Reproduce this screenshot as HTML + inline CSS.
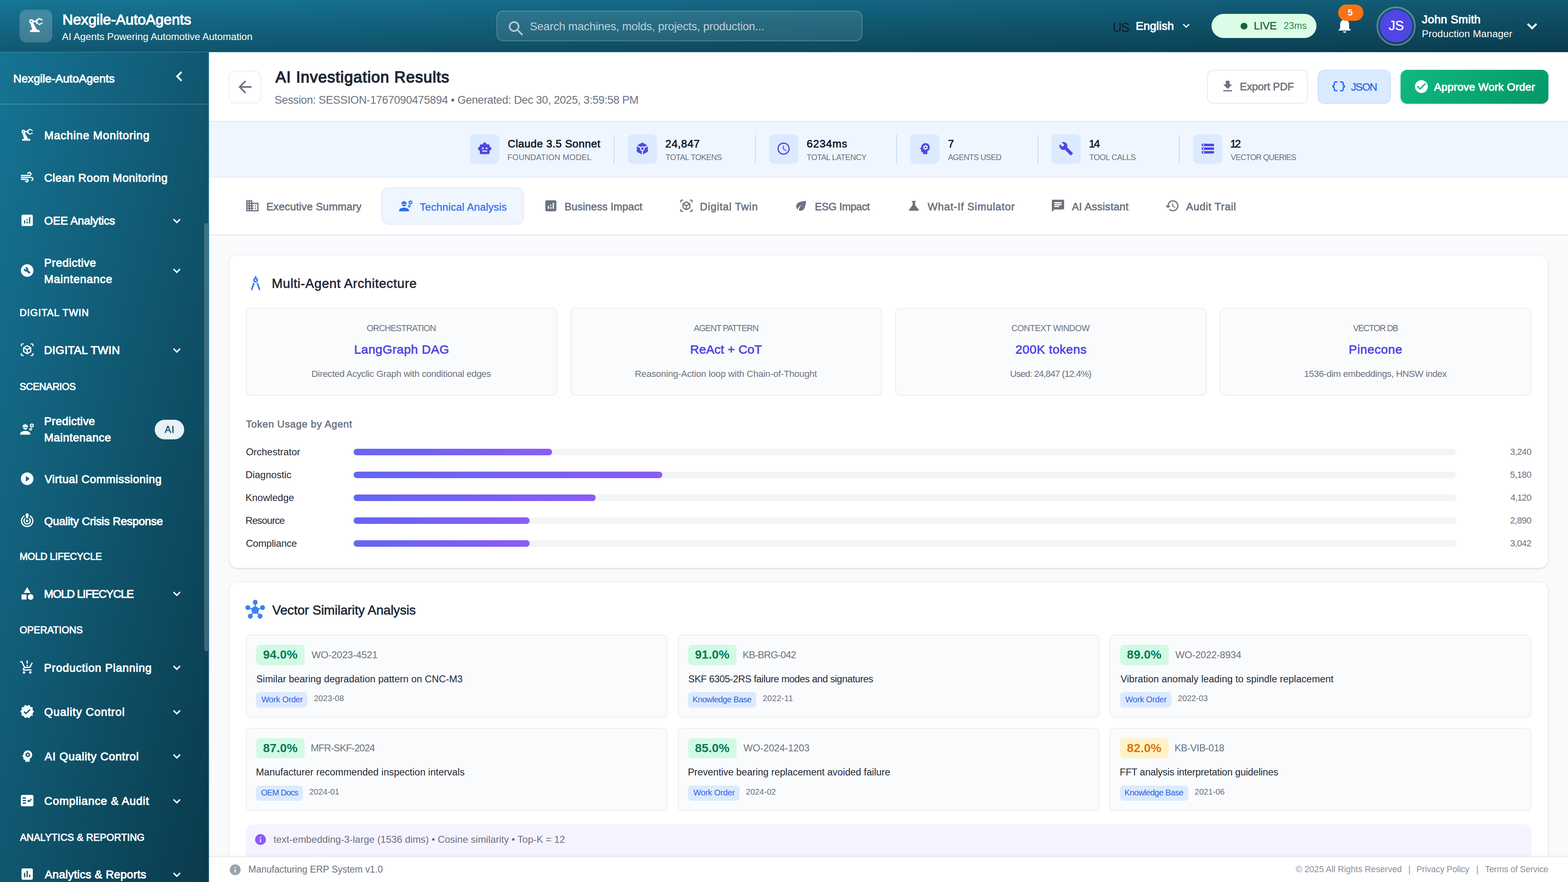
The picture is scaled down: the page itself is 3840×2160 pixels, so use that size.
<!DOCTYPE html>
<html lang="en">
<head>
<meta charset="utf-8">
<title>Nexgile-AutoAgents – AI Investigation Results</title>
<meta name="viewport" content="width=3840, initial-scale=1">
<style>
*{margin:0;padding:0}
html,body{width:3840px;height:2160px;overflow:hidden;background:#f9fafb}
body{font-family:"Liberation Sans",sans-serif;-webkit-font-smoothing:antialiased}
#app{position:absolute;left:0;top:0;width:3840px;height:2160px;overflow:hidden}
.a,.t,.i{position:absolute;display:block}
.t{line-height:1;white-space:pre;font-weight:400;font-style:normal}
#topbar{position:absolute;left:0;top:0;width:3840px;height:127.5px;box-sizing:border-box;
 background:linear-gradient(to bottom right,#177696,#0a3a4c);border-bottom:1px solid rgba(255,255,255,.2)}
#sidebar{position:absolute;left:0;top:127.5px;width:512px;height:2032.5px;box-sizing:border-box;overflow:hidden;
 background:linear-gradient(to bottom right,#167494,#0a3a4c);border-right:2px solid rgba(255,255,255,.09)}
#sidebar>*{margin-top:-127.5px}
#main{position:absolute;left:0;top:0;width:3840px;height:2160px;overflow:hidden}
.pagehead{left:512px;top:127.5px;width:3328px;height:170px;box-sizing:border-box;background:#fff;border-bottom:2px solid #e5e7eb}
.statsbar{left:512px;top:297.5px;width:3328px;height:137.5px;box-sizing:border-box;background:#eff6ff;border-bottom:2px solid #e3edfc}
.tabsbar{left:512px;top:435px;width:3328px;height:141px;box-sizing:border-box;background:#fff;border-bottom:2px solid #e5e7eb}

</style>
</head>
<body>
<div id="app">
<main id="main">
<div class="a pagehead"></div>
<div class="a statsbar"></div>
<div class="a tabsbar"></div>

<div class="a" style="left:560px;top:173px;width:80px;height:80px;box-sizing:border-box;border:2px solid #eceef1;border-radius:16px;background:#fff;"></div>
<svg class="i" viewBox="0 0 24 24" width="48" height="48" style="left:576.2px;top:189px;"><path d="M20 11H7.83l5.59-5.59L12 4l-8 8 8 8 1.41-1.41L7.83 13H20v-2z" fill="#6b7280"/></svg>
<h1 class="t" style="left:674.8px;top:170px;font-size:38.2px;-webkit-text-stroke:1.68px;letter-spacing:1.13px;color:#1f2937;">AI Investigation Results</h1>
<p class="t" style="left:672.6px;top:232px;font-size:27px;letter-spacing:-0.37px;color:#6b7280;">Session: SESSION-1767090475894 • Generated: Dec 30, 2025, 3:59:58 PM</p>
<div class="a" style="left:2955.6px;top:171.3px;width:247.4px;height:83px;box-sizing:border-box;border:2px solid #e8eaed;border-radius:16px;background:#fff;"></div>
<svg class="i" viewBox="0 0 24 24" width="37" height="37" style="left:2987.5px;top:192.5px;"><path d="M19 9h-4V3H9v6H5l7 7 7-7zM5 18v2h14v-2H5z" fill="#6b7280"/></svg>
<span class="t" style="left:3036.3px;top:199px;font-size:26px;-webkit-text-stroke:0.81px;letter-spacing:-0.2px;color:#6b7280;">Export PDF</span>
<div class="a" style="left:3227px;top:171.3px;width:179px;height:83px;box-sizing:border-box;border:2px solid #c9defc;border-radius:16px;background:#dbeafe;"></div>
<svg class="i" viewBox="0 0 24 24" width="37" height="37" style="left:3260px;top:192.5px;"><path d="M4 7v2c0 .55-.45 1-1 1H2v4h1c.55 0 1 .45 1 1v2c0 1.65 1.35 3 3 3h3v-2H7c-.55 0-1-.45-1-1v-2c0-1.3-.84-2.42-2-2.83v-.34C5.16 11.42 6 10.3 6 9V7c0-.55.45-1 1-1h3V4H7C5.35 4 4 5.35 4 7z M21 10c-.55 0-1-.45-1-1V7c0-1.65-1.35-3-3-3h-3v2h3c.55 0 1 .45 1 1v2c0 1.3.84 2.42 2 2.83v.34c-1.16.41-2 1.52-2 2.83v2c0 .55-.45 1-1 1h-3v2h3c1.65 0 3-1.35 3-3v-2c0-.55.45-1 1-1h1v-4h-1z" fill="#2563eb"/></svg>
<span class="t" style="left:3308.4px;top:200px;font-size:26px;-webkit-text-stroke:0.42px;letter-spacing:-1.53px;color:#2563eb;">JSON</span>
<div class="a" style="left:3430px;top:171px;width:362px;height:83px;border-radius:16px;background:linear-gradient(135deg,#10b981,#059669);box-shadow:0 2px 4px rgba(5,150,105,.18);"></div>
<svg class="i" viewBox="0 0 24 24" width="38" height="38" style="left:3462.4px;top:192.5px;"><path d="M12 2C6.48 2 2 6.48 2 12s4.48 10 10 10 10-4.48 10-10S17.52 2 12 2zm-2 15l-5-5 1.41-1.41L10 14.17l7.59-7.59L19 8l-9 9z" fill="#fff"/></svg>
<span class="t" style="left:3512px;top:200px;font-size:26.5px;-webkit-text-stroke:1.17px;letter-spacing:0.29px;color:#fff;">Approve Work Order</span>
<div class="a" style="left:1151.3px;top:329.3px;width:71.4px;height:72px;border-radius:12px;background:#dbeafe;"></div>
<svg class="i" viewBox="0 0 24 24" width="36" height="36" style="left:1168.8px;top:346.2px;"><path d="M20 9V7c0-1.1-.9-2-2-2h-3c0-1.66-1.34-3-3-3S9 3.34 9 5H6c-1.1 0-2 .9-2 2v2c-1.66 0-3 1.34-3 3s1.34 3 3 3v4c0 1.1.9 2 2 2h12c1.1 0 2-.9 2-2v-4c1.66 0 3-1.34 3-3s-1.34-3-3-3zM7.5 11.5c0-.83.67-1.5 1.5-1.5s1.5.67 1.5 1.5S9.83 13 9 13s-1.5-.67-1.5-1.5zM16 17H8v-2h8v2zm-1-4c-.83 0-1.5-.67-1.5-1.5S14.17 10 15 10s1.5.67 1.5 1.5S15.83 13 15 13z" fill="#4f46e5"/></svg>
<span class="t" style="left:1243.2px;top:339px;font-size:26.6px;-webkit-text-stroke:0.82px;letter-spacing:0.41px;color:#111827;">Claude 3.5 Sonnet</span>
<span class="t" style="left:1242.6px;top:376px;font-size:19.5px;letter-spacing:0.23px;color:#6b7280;">FOUNDATION MODEL</span>
<div class="a" style="left:1502.9px;top:329.6px;width:2.2px;height:71.5px;background:#c3dafc;"></div>
<div class="a" style="left:1537.7px;top:329.3px;width:71.4px;height:72px;border-radius:12px;background:#dbeafe;"></div>
<svg class="i" viewBox="0 0 24 24" width="36" height="36" style="left:1555.2px;top:346.2px;"><defs><mask id="tokm"><path d="M12 2l9 5v10l-9 5-9-5V7z" fill="#fff"/><path d="M12 12L3 7M12 12l9-5M12 12v10" stroke="#000" stroke-width="2" fill="none"/><circle cx="12" cy="12" r="3.9" fill="#000"/><circle cx="12" cy="12" r="2.05" fill="#fff"/></mask></defs><rect width="24" height="24" fill="#4f46e5" mask="url(#tokm)"/></svg>
<span class="t" style="left:1629.3px;top:339px;font-size:26.6px;-webkit-text-stroke:0.82px;letter-spacing:0.6px;color:#111827;">24,847</span>
<span class="t" style="left:1629.8px;top:376px;font-size:19.5px;letter-spacing:-0.62px;color:#6b7280;">TOTAL TOKENS</span>
<div class="a" style="left:1848.9px;top:329.6px;width:2.2px;height:71.5px;background:#c3dafc;"></div>
<div class="a" style="left:1883.5px;top:329.3px;width:71.4px;height:72px;border-radius:12px;background:#dbeafe;"></div>
<svg class="i" viewBox="0 0 24 24" width="36" height="36" style="left:1901px;top:346.2px;"><path d="M11.99 2C6.47 2 2 6.48 2 12s4.47 10 9.99 10C17.52 22 22 17.52 22 12S17.52 2 11.99 2zM12 20c-4.42 0-8-3.58-8-8s3.58-8 8-8 8 3.58 8 8-3.58 8-8 8zm.5-13H11v6l5.25 3.15.75-1.23-4.5-2.67z" fill="#4f46e5"/></svg>
<span class="t" style="left:1975.6px;top:339px;font-size:26.6px;-webkit-text-stroke:0.82px;letter-spacing:0.92px;color:#111827;">6234ms</span>
<span class="t" style="left:1975.6px;top:376px;font-size:19.5px;letter-spacing:-0.62px;color:#6b7280;">TOTAL LATENCY</span>
<div class="a" style="left:2194.7px;top:329.6px;width:2.2px;height:71.5px;background:#c3dafc;"></div>
<div class="a" style="left:2229.3px;top:329.3px;width:71.4px;height:72px;border-radius:12px;background:#dbeafe;"></div>
<svg class="i" viewBox="0 0 24 24" width="36" height="36" style="left:2246.8px;top:346.2px;"><path d="M13 8.57c-.79 0-1.43.64-1.43 1.43s.64 1.43 1.43 1.43 1.43-.64 1.43-1.43-.64-1.43-1.43-1.43z M13 3C9.25 3 6.2 5.94 6.02 9.64L4.1 12.2c-.25.33-.01.8.4.8H6v3c0 1.1.9 2 2 2h1v3h7v-4.68c2.36-1.12 4-3.53 4-6.32 0-3.87-3.13-7-7-7zm3 7c0 .13-.01.26-.02.39l.83.66c.08.06.1.16.05.25l-.8 1.39c-.05.09-.16.12-.24.09l-.99-.4c-.21.16-.43.29-.67.39L14 13.83c-.01.1-.1.17-.2.17h-1.6c-.1 0-.18-.07-.2-.17l-.15-1.06c-.25-.1-.47-.23-.68-.39l-.99.4c-.09.03-.2 0-.25-.09l-.8-1.39c-.05-.08-.03-.19.05-.25l.84-.66c-.01-.13-.02-.26-.02-.39s.02-.27.04-.39l-.85-.66c-.08-.06-.1-.16-.05-.26l.8-1.38c.05-.09.15-.12.24-.09l1 .4c.2-.15.43-.29.67-.39l.15-1.06c.02-.1.1-.17.2-.17h1.6c.1 0 .18.07.2.17l.15 1.06c.24.1.46.23.67.39l1-.4c.09-.03.2 0 .24.09l.8 1.38c.05.09.03.2-.05.26l-.85.66c.03.12.04.25.04.39z" fill="#4f46e5"/></svg>
<span class="t" style="left:2321.5px;top:339px;font-size:26.6px;-webkit-text-stroke:0.82px;color:#111827;">7</span>
<span class="t" style="left:2321.4px;top:376px;font-size:19.5px;letter-spacing:-0.84px;color:#6b7280;">AGENTS USED</span>
<div class="a" style="left:2540.5px;top:329.6px;width:2.2px;height:71.5px;background:#c3dafc;"></div>
<div class="a" style="left:2575.3px;top:329.3px;width:71.4px;height:72px;border-radius:12px;background:#dbeafe;"></div>
<svg class="i" viewBox="0 0 24 24" width="36" height="36" style="left:2592.8px;top:346.2px;"><path d="M22.7 19l-9.1-9.1c.9-2.3.4-5-1.5-6.9-2-2-5-2.4-7.4-1.3L9 6 6 9 1.6 4.7C.4 7.1.9 10.1 2.9 12.1c1.9 1.9 4.6 2.4 6.9 1.5l9.1 9.1c.4.4 1 .4 1.4 0l2.3-2.3c.5-.4.5-1.1.1-1.4z" fill="#4f46e5"/></svg>
<span class="t" style="left:2666.8px;top:339px;font-size:26.6px;-webkit-text-stroke:0.82px;letter-spacing:-2.6px;color:#111827;">14</span>
<span class="t" style="left:2667.4px;top:376px;font-size:19.5px;letter-spacing:-0.53px;color:#6b7280;">TOOL CALLS</span>
<div class="a" style="left:2886.9px;top:329.6px;width:2.2px;height:71.5px;background:#c3dafc;"></div>
<div class="a" style="left:2922px;top:329.3px;width:71.4px;height:72px;border-radius:12px;background:#dbeafe;"></div>
<svg class="i" viewBox="0 0 24 24" width="36" height="36" style="left:2939.5px;top:346.2px;"><path d="M2 20h20v-4H2v4zm2-3h2v2H4v-2zM2 4v4h20V4H2zm4 3H4V5h2v2zm-4 7h20v-4H2v4zm2-3h2v2H4v-2z" fill="#4f46e5"/></svg>
<span class="t" style="left:3012.7px;top:339px;font-size:26.6px;-webkit-text-stroke:0.82px;letter-spacing:-3.2px;color:#111827;">12</span>
<span class="t" style="left:3014.1px;top:376px;font-size:19.5px;letter-spacing:-1.03px;color:#6b7280;">VECTOR QUERIES</span>
<div class="a" style="left:934.2px;top:459.2px;width:349.3px;height:90.8px;box-sizing:border-box;border:2px solid #dfeafc;border-radius:18px;background:#eff6ff;"></div>
<svg class="i" viewBox="0 0 24 24" width="36" height="36" style="left:600px;top:485.9px;"><path d="M12 7V3H2v18h20V7H12zM6 19H4v-2h2v2zm0-4H4v-2h2v2zm0-4H4V9h2v2zm0-4H4V5h2v2zm4 12H8v-2h2v2zm0-4H8v-2h2v2zm0-4H8V9h2v2zm0-4H8V5h2v2zm10 12h-8v-2h2v-2h-2v-2h2v-2h-2V9h8v10zm-2-8h-2v2h2v-2zm0 4h-2v2h2v-2z" fill="#6b7280"/></svg>
<span class="t" style="left:652.2px;top:494px;font-size:25.8px;-webkit-text-stroke:0.8px;letter-spacing:0.22px;color:#6b7280;">Executive Summary</span>
<svg class="i" viewBox="0 0 24 24" width="36" height="36" style="left:975.7px;top:485.9px;"><path d="M9 15c-2.67 0-8 1.34-8 4v2h16v-2c0-2.66-5.33-4-8-4z M22.1 6.84c.01-.11.02-.22.02-.34 0-.12-.01-.23-.03-.34l.74-.58c.07-.05.08-.15.04-.22l-.7-1.21c-.04-.08-.14-.1-.21-.08l-.86.35c-.18-.14-.38-.25-.59-.34l-.13-.93c-.02-.09-.09-.15-.18-.15h-1.4c-.09 0-.16.06-.17.15l-.13.93c-.21.09-.41.21-.59.34l-.87-.35c-.08-.03-.17 0-.21.08l-.7 1.21c-.04.08-.03.17.04.22l.74.58c-.02.11-.03.23-.03.34 0 .11.01.23.03.34l-.74.58c-.07.05-.08.15-.04.22l.7 1.21c.04.08.14.1.21.08l.87-.35c.18.14.38.25.59.34l.13.93c.01.09.08.15.17.15h1.4c.09 0 .16-.06.17-.15l.13-.93c.21-.09.41-.21.59-.34l.87.35c.08.03.17 0 .21-.08l.7-1.21c.04-.08.03-.17-.04-.22l-.73-.58zm-2.6.91c-.69 0-1.25-.56-1.25-1.25s.56-1.25 1.25-1.25 1.25.56 1.25 1.25-.56 1.25-1.25 1.25z M19.92 11.68l-.5-.87c-.03-.06-.1-.08-.15-.06l-.62.25c-.13-.1-.27-.18-.42-.24l-.09-.66c-.02-.06-.08-.1-.14-.1h-1c-.06 0-.11.04-.12.11l-.09.66c-.15.06-.29.15-.42.24l-.62-.25c-.06-.02-.12 0-.15.06l-.5.87c-.03.06-.02.12.03.16l.53.41c-.01.08-.02.16-.02.24 0 .08.01.17.02.24l-.53.41c-.05.04-.06.11-.03.16l.5.87c.03.06.1.08.15.06l.62-.25c.13.1.27.18.42.24l.09.66c.01.07.06.11.12.11h1c.06 0 .12-.04.12-.11l.09-.66c.15-.06.29-.15.42-.24l.62.25c.06.02.12 0 .15-.06l.5-.87c.03-.06.02-.12-.03-.16l-.52-.41c.01-.08.02-.16.02-.24 0-.08-.01-.17-.02-.24l.53-.41c.05-.04.06-.11.04-.17zm-2.42 1.65c-.46 0-.83-.38-.83-.83 0-.46.38-.83.83-.83s.83.38.83.83c0 .46-.37.83-.83.83z M4.74 9h8.53c.27 0 .49-.22.49-.49v-.02c0-.27-.22-.49-.49-.49H13c0-1.48-.81-2.75-2-3.45v.95c0 .28-.22.5-.5.5s-.5-.22-.5-.5V4.14C9.68 4.06 9.35 4 9 4s-.68.06-1 .14V5.5c0 .28-.22.5-.5.5S7 5.78 7 5.5v-.95C5.81 5.25 5 6.52 5 8h-.26c-.27 0-.49.22-.49.49v.03c0 .26.22.48.49.48z M9 13c1.86 0 3.41-1.28 3.86-3H5.14c.45 1.72 2 3 3.86 3z" fill="#2e6fe8"/></svg>
<span class="t" style="left:1028px;top:495px;font-size:25.8px;-webkit-text-stroke:0.41px;letter-spacing:0.22px;color:#2e6fe8;">Technical Analysis</span>
<svg class="i" viewBox="0 0 24 24" width="36" height="36" style="left:1330.6px;top:485.9px;"><path d="M19 3H5c-1.1 0-2 .9-2 2v14c0 1.1.9 2 2 2h14c1.1 0 2-.9 2-2V5c0-1.1-.9-2-2-2zM9 17H7v-5h2v5zm4 0h-2v-3h2v3zm0-5h-2v-2h2v2zm4 5h-2V7h2v10z" fill="#6b7280"/></svg>
<span class="t" style="left:1382.4px;top:494px;font-size:25.8px;-webkit-text-stroke:0.8px;letter-spacing:0.11px;color:#6b7280;">Business Impact</span>
<svg class="i" viewBox="0 0 24 24" width="36" height="36" style="left:1662.7px;top:485.9px;"><path d="M3 4c0-.55.45-1 1-1h2V1H4C2.34 1 1 2.34 1 4v2h2V4z M3 20v-2H1v2c0 1.66 1.34 3 3 3h2v-2H4c-.55 0-1-.45-1-1z M20 1h-2v2h2c.55 0 1 .45 1 1v2h2V4c0-1.66-1.34-3-3-3z M21 20c0 .55-.45 1-1 1h-2v2h2c1.66 0 3-1.34 3-3v-2h-2v2z M19 14.87V9.13c0-.72-.38-1.38-1-1.73l-5-2.88c-.31-.18-.65-.27-1-.27s-.69.09-1 .27L6 7.39c-.62.36-1 1.02-1 1.74v5.74c0 .72.38 1.38 1 1.73l5 2.88c.31.18.65.27 1 .27s.69-.09 1-.27l5-2.88c.62-.35 1-1.01 1-1.73zm-8 2.3l-4-2.3v-4.63l4 2.33v4.6zm1-6.33L8.04 8.53 12 6.25l3.96 2.28L12 10.84zm5 4.03l-4 2.3v-4.6l4-2.33v4.63z" fill="#6b7280" transform="translate(12 12) scale(.93) translate(-12 -12)"/></svg>
<span class="t" style="left:1714px;top:494px;font-size:25.8px;-webkit-text-stroke:0.8px;letter-spacing:0.93px;color:#6b7280;">Digital Twin</span>
<svg class="i" viewBox="0 0 24 24" width="36" height="36" style="left:1944px;top:485.9px;"><path d="M6.05 8.05c-2.73 2.73-2.73 7.15-.02 9.88 1.47-3.4 4.09-6.24 7.36-7.93-2.77 2.34-4.71 5.61-5.39 9.32 2.6 1.23 5.8.78 7.95-1.37C19.43 14.47 20 4 20 4S9.53 4.57 6.05 8.05z" fill="#6b7280"/></svg>
<span class="t" style="left:1995.5px;top:494px;font-size:25.8px;-webkit-text-stroke:0.8px;letter-spacing:-0.48px;color:#6b7280;">ESG Impact</span>
<svg class="i" viewBox="0 0 24 24" width="36" height="36" style="left:2219.5px;top:485.9px;"><path d="M19.8 18.4L14 10.67V6.5l1.35-1.69c.26-.33.03-.81-.39-.81H9.04c-.42 0-.65.48-.39.81L10 6.5v4.17L4.2 18.4c-.49.66-.02 1.6.8 1.6h14c.82 0 1.29-.94.8-1.6z" fill="#6b7280"/></svg>
<span class="t" style="left:2271.8px;top:494px;font-size:25.8px;-webkit-text-stroke:0.8px;letter-spacing:0.86px;color:#6b7280;">What-If Simulator</span>
<svg class="i" viewBox="0 0 24 24" width="36" height="36" style="left:2573px;top:485.9px;"><path d="M20 2H4c-1.1 0-1.99.9-1.99 2L2 22l4-4h14c1.1 0 2-.9 2-2V4c0-1.1-.9-2-2-2zM6 9h12v2H6V9zm8 5H6v-2h8v2zm4-6H6V6h12v2z" fill="#6b7280"/></svg>
<span class="t" style="left:2625px;top:494px;font-size:25.8px;-webkit-text-stroke:0.8px;letter-spacing:0.36px;color:#6b7280;">AI Assistant</span>
<svg class="i" viewBox="0 0 24 24" width="36" height="36" style="left:2853.3px;top:485.9px;"><path d="M13 3c-4.97 0-9 4.03-9 9H1l3.89 3.89.07.14L9 12H6c0-3.87 3.13-7 7-7s7 3.13 7 7-3.13 7-7 7c-1.93 0-3.68-.79-4.94-2.06l-1.42 1.42C8.27 19.99 10.51 21 13 21c4.97 0 9-4.03 9-9s-4.03-9-9-9zm-1 5v5l4.28 2.54.72-1.21-3.5-2.08V8H12z" fill="#6b7280"/></svg>
<span class="t" style="left:2904.8px;top:494px;font-size:25.8px;-webkit-text-stroke:0.8px;letter-spacing:0.72px;color:#6b7280;">Audit Trail</span>
<section class="a" style="left:559.6px;top:623.4px;width:3232.4px;height:768.6px;box-sizing:border-box;border:2px solid #eef0f3;border-radius:22px;background:#fff;box-shadow:0 2px 3px rgba(0,0,0,.09),0 1px 2px rgba(0,0,0,.05);"></section>
<svg class="i" viewBox="0 0 24 24" width="48" height="48" style="left:601.7px;top:669.6px;"><path d="M6.36 18.78L6.61 21l1.62-1.54 2.77-7.6c-.68-.17-1.28-.51-1.77-.98l-2.87 7.9zM14.77 10.88c-.49.47-1.1.81-1.77.98l2.77 7.6L17.39 21l.26-2.22-2.88-7.9zM15 8c0-1.3-.84-2.4-2-2.82V3h-2v2.18C9.84 5.6 9 6.7 9 8c0 1.66 1.34 3 3 3s3-1.34 3-3zm-3 1c-.55 0-1-.45-1-1s.45-1 1-1 1 .45 1 1-.45 1-1 1z" fill="#3b82f6"/></svg>
<h2 class="t" style="left:665.5px;top:678px;font-size:32px;-webkit-text-stroke:0.77px;letter-spacing:0.66px;color:#1f2937;">Multi-Agent Architecture</h2>
<div class="a" style="left:601.5px;top:754px;width:763px;height:215px;box-sizing:border-box;border:2px solid #eceef1;border-radius:12px;background:#fafbfc;"></div>
<span class="t" style="left:898.1px;top:794px;font-size:21.3px;letter-spacing:-1.08px;color:#6b7280;">ORCHESTRATION</span>
<span class="t" style="left:867.3px;top:841px;font-size:30.3px;-webkit-text-stroke:0.94px;letter-spacing:0.57px;color:#4f46e5;">LangGraph DAG</span>
<span class="t" style="left:762.7px;top:905px;font-size:22.5px;letter-spacing:-0.35px;color:#6b7280;">Directed Acyclic Graph with conditional edges</span>
<div class="a" style="left:1396.7px;top:754px;width:763px;height:215px;box-sizing:border-box;border:2px solid #eceef1;border-radius:12px;background:#fafbfc;"></div>
<span class="t" style="left:1699.1px;top:794px;font-size:21.3px;letter-spacing:-1.33px;color:#6b7280;">AGENT PATTERN</span>
<span class="t" style="left:1690.1px;top:841px;font-size:30.3px;-webkit-text-stroke:0.94px;letter-spacing:0.17px;color:#4f46e5;">ReAct + CoT</span>
<span class="t" style="left:1554.8px;top:905px;font-size:22.5px;letter-spacing:-0.19px;color:#6b7280;">Reasoning-Action loop with Chain-of-Thought</span>
<div class="a" style="left:2191.9px;top:754px;width:763px;height:215px;box-sizing:border-box;border:2px solid #eceef1;border-radius:12px;background:#fafbfc;"></div>
<span class="t" style="left:2476.7px;top:794px;font-size:21.3px;letter-spacing:-0.66px;color:#6b7280;">CONTEXT WINDOW</span>
<span class="t" style="left:2486.7px;top:841px;font-size:30.3px;-webkit-text-stroke:0.94px;letter-spacing:0.57px;color:#4f46e5;">200K tokens</span>
<span class="t" style="left:2473.5px;top:905px;font-size:22.5px;letter-spacing:-1.01px;color:#6b7280;">Used: 24,847 (12.4%)</span>
<div class="a" style="left:2987.1px;top:754px;width:763px;height:215px;box-sizing:border-box;border:2px solid #eceef1;border-radius:12px;background:#fafbfc;"></div>
<span class="t" style="left:3313.5px;top:794px;font-size:21.3px;letter-spacing:-1.57px;color:#6b7280;">VECTOR DB</span>
<span class="t" style="left:3303.1px;top:841px;font-size:30.3px;-webkit-text-stroke:0.94px;letter-spacing:0.63px;color:#4f46e5;">Pinecone</span>
<span class="t" style="left:3193.5px;top:905px;font-size:22.5px;letter-spacing:-0.47px;color:#6b7280;">1536-dim embeddings, HNSW index</span>
<h3 class="t" style="left:602.3px;top:1027px;font-size:24.6px;-webkit-text-stroke:0.76px;letter-spacing:0.72px;color:#6b7280;">Token Usage by Agent</h3>
<span class="t" style="left:602.2px;top:1095px;font-size:24.1px;letter-spacing:-0.07px;color:#1f2937;">Orchestrator</span>
<div class="a" style="left:865.6px;top:1099px;width:2700.6px;height:16px;border-radius:8px;background:#f3f4f6;"></div>
<div class="a" style="left:865.6px;top:1099px;width:486px;height:16px;border-radius:8px;background:linear-gradient(90deg,#6366f1,#8b5cf6);"></div>
<span class="t" style="left:3698.2px;top:1096px;font-size:22px;letter-spacing:-0.65px;color:#6b7280;">3,240</span>
<span class="t" style="left:601.2px;top:1151px;font-size:24.1px;letter-spacing:-0.02px;color:#1f2937;">Diagnostic</span>
<div class="a" style="left:865.6px;top:1154.8px;width:2700.6px;height:16px;border-radius:8px;background:#f3f4f6;"></div>
<div class="a" style="left:865.6px;top:1154.8px;width:756.3px;height:16px;border-radius:8px;background:linear-gradient(90deg,#6366f1,#8b5cf6);"></div>
<span class="t" style="left:3698.2px;top:1152px;font-size:22px;letter-spacing:-0.65px;color:#6b7280;">5,180</span>
<span class="t" style="left:601.2px;top:1207px;font-size:24.1px;letter-spacing:-0.03px;color:#1f2937;">Knowledge</span>
<div class="a" style="left:865.6px;top:1210.9px;width:2700.6px;height:16px;border-radius:8px;background:#f3f4f6;"></div>
<div class="a" style="left:865.6px;top:1210.9px;width:593.3px;height:16px;border-radius:8px;background:linear-gradient(90deg,#6366f1,#8b5cf6);"></div>
<span class="t" style="left:3699.2px;top:1208px;font-size:22px;letter-spacing:-0.9px;color:#6b7280;">4,120</span>
<span class="t" style="left:601.2px;top:1263px;font-size:24.1px;letter-spacing:-0.94px;color:#1f2937;">Resource</span>
<div class="a" style="left:865.6px;top:1266.6px;width:2700.6px;height:16px;border-radius:8px;background:#f3f4f6;"></div>
<div class="a" style="left:865.6px;top:1266.6px;width:431.8px;height:16px;border-radius:8px;background:linear-gradient(90deg,#6366f1,#8b5cf6);"></div>
<span class="t" style="left:3698.2px;top:1264px;font-size:22px;letter-spacing:-0.65px;color:#6b7280;">2,890</span>
<span class="t" style="left:602.2px;top:1319px;font-size:24.1px;letter-spacing:-0.24px;color:#1f2937;">Compliance</span>
<div class="a" style="left:865.6px;top:1322.7px;width:2700.6px;height:16px;border-radius:8px;background:#f3f4f6;"></div>
<div class="a" style="left:865.6px;top:1322.7px;width:431.8px;height:16px;border-radius:8px;background:linear-gradient(90deg,#6366f1,#8b5cf6);"></div>
<span class="t" style="left:3698.2px;top:1320px;font-size:22px;letter-spacing:-0.65px;color:#6b7280;">3,042</span>
<section class="a" style="left:560px;top:1424px;width:3232px;height:720px;box-sizing:border-box;border:2px solid #eef0f3;border-radius:22px;background:#fff;box-shadow:0 2px 3px rgba(0,0,0,.09),0 1px 2px rgba(0,0,0,.05);"></section>
<svg class="i" viewBox="0 0 24 24" width="48" height="48" style="left:601.1px;top:1468.8px;"><path d="M8.4 18.2c.38.5.6 1.12.6 1.8 0 1.66-1.34 3-3 3s-3-1.34-3-3 1.34-3 3-3c.44 0 .85.09 1.23.26l1.41-1.77c-.92-1.03-1.29-2.39-1.09-3.69l-2.03-.68C4.98 11.95 4.06 12.5 3 12.5c-1.66 0-3-1.34-3-3s1.34-3 3-3 3 1.34 3 3c0 .07 0 .14-.01.21l2.03.68c.64-1.21 1.82-2.09 3.22-2.32V5.91C9.96 5.57 9 4.4 9 3c0-1.66 1.34-3 3-3s3 1.34 3 3c0 1.4-.96 2.57-2.25 2.91v2.16c1.4.23 2.58 1.11 3.22 2.32l2.03-.68C18 9.64 18 9.57 18 9.5c0-1.66 1.34-3 3-3s3 1.34 3 3-1.34 3-3 3c-1.06 0-1.98-.55-2.52-1.37l-2.03.68c.2 1.29-.16 2.65-1.09 3.69l1.41 1.77c.38-.17.79-.26 1.23-.26 1.66 0 3 1.34 3 3s-1.34 3-3 3-3-1.34-3-3c0-.68.22-1.3.6-1.8l-1.41-1.77c-1.35.75-3.01.76-4.37 0L8.4 18.2z" fill="#3b82f6"/></svg>
<h2 class="t" style="left:666.8px;top:1478px;font-size:32px;-webkit-text-stroke:0.77px;letter-spacing:-0.17px;color:#1f2937;">Vector Similarity Analysis</h2>
<article class="a" style="left:601.7px;top:1554.3px;width:1033px;height:203.5px;box-sizing:border-box;border:2px solid #eceef1;border-radius:12px;background:#fafbfc;"></article>
<div class="a" style="left:627px;top:1579.1px;width:119px;height:49.5px;border-radius:9px;background:#d1fae5;"></div>
<span class="t" style="left:644.2px;top:1588px;font-size:29.5px;font-weight:700;letter-spacing:0.2px;color:#047857;">94.0%</span>
<span class="t" style="left:763px;top:1592px;font-size:24px;letter-spacing:-0.21px;color:#6b7280;">WO-2023-4521</span>
<span class="t" style="left:627.7px;top:1651px;font-size:23.85px;letter-spacing:0.01px;color:#1f2937;">Similar bearing degradation pattern on CNC-M3</span>
<div class="a" style="left:627px;top:1695px;width:126.3px;height:37.5px;border-radius:8px;background:#dbeafe;"></div>
<span class="t" style="left:640.2px;top:1703px;font-size:20.2px;letter-spacing:-0.26px;color:#2b60de;">Work Order</span>
<span class="t" style="left:768.7px;top:1700px;font-size:20.1px;color:#6b7280;">2023-08</span>
<article class="a" style="left:1659.5px;top:1554.3px;width:1033px;height:203.5px;box-sizing:border-box;border:2px solid #eceef1;border-radius:12px;background:#fafbfc;"></article>
<div class="a" style="left:1684.8px;top:1579.1px;width:119px;height:49.5px;border-radius:9px;background:#d1fae5;"></div>
<span class="t" style="left:1702px;top:1588px;font-size:29.5px;font-weight:700;letter-spacing:0.2px;color:#047857;">91.0%</span>
<span class="t" style="left:1818.8px;top:1592px;font-size:24px;letter-spacing:-1px;color:#6b7280;">KB-BRG-042</span>
<span class="t" style="left:1685.5px;top:1651px;font-size:23.85px;letter-spacing:-0.5px;color:#1f2937;">SKF 6305-2RS failure modes and signatures</span>
<div class="a" style="left:1684.8px;top:1695px;width:167.5px;height:37.5px;border-radius:8px;background:#dbeafe;"></div>
<span class="t" style="left:1696px;top:1703px;font-size:20.2px;letter-spacing:-0.52px;color:#2b60de;">Knowledge Base</span>
<span class="t" style="left:1867.7px;top:1700px;font-size:20.1px;letter-spacing:0.33px;color:#6b7280;">2022-11</span>
<article class="a" style="left:2717.3px;top:1554.3px;width:1033px;height:203.5px;box-sizing:border-box;border:2px solid #eceef1;border-radius:12px;background:#fafbfc;"></article>
<div class="a" style="left:2742.6px;top:1579.1px;width:119px;height:49.5px;border-radius:9px;background:#d1fae5;"></div>
<span class="t" style="left:2759.8px;top:1588px;font-size:29.5px;font-weight:700;letter-spacing:0.2px;color:#047857;">89.0%</span>
<span class="t" style="left:2878.6px;top:1592px;font-size:24px;letter-spacing:-0.24px;color:#6b7280;">WO-2022-8934</span>
<span class="t" style="left:2744.3px;top:1651px;font-size:23.85px;letter-spacing:0.02px;color:#1f2937;">Vibration anomaly leading to spindle replacement</span>
<div class="a" style="left:2742.6px;top:1695px;width:126.3px;height:37.5px;border-radius:8px;background:#dbeafe;"></div>
<span class="t" style="left:2755.8px;top:1703px;font-size:20.2px;letter-spacing:-0.26px;color:#2b60de;">Work Order</span>
<span class="t" style="left:2884.3px;top:1700px;font-size:20.1px;color:#6b7280;">2022-03</span>
<article class="a" style="left:601.7px;top:1782.9px;width:1033px;height:203.5px;box-sizing:border-box;border:2px solid #eceef1;border-radius:12px;background:#fafbfc;"></article>
<div class="a" style="left:627px;top:1807.7px;width:119px;height:49.5px;border-radius:9px;background:#d1fae5;"></div>
<span class="t" style="left:644.2px;top:1817px;font-size:29.5px;font-weight:700;letter-spacing:0.2px;color:#047857;">87.0%</span>
<span class="t" style="left:761px;top:1820px;font-size:24px;letter-spacing:-0.97px;color:#6b7280;">MFR-SKF-2024</span>
<span class="t" style="left:626.7px;top:1879px;font-size:23.85px;letter-spacing:0.05px;color:#1f2937;">Manufacturer recommended inspection intervals</span>
<div class="a" style="left:627px;top:1923.6px;width:114.8px;height:37.5px;border-radius:8px;background:#dbeafe;"></div>
<span class="t" style="left:639.2px;top:1931px;font-size:20.2px;letter-spacing:-0.84px;color:#2b60de;">OEM Docs</span>
<span class="t" style="left:757.2px;top:1929px;font-size:20.1px;color:#6b7280;">2024-01</span>
<article class="a" style="left:1659.5px;top:1782.9px;width:1033px;height:203.5px;box-sizing:border-box;border:2px solid #eceef1;border-radius:12px;background:#fafbfc;"></article>
<div class="a" style="left:1684.8px;top:1807.7px;width:119px;height:49.5px;border-radius:9px;background:#d1fae5;"></div>
<span class="t" style="left:1702px;top:1817px;font-size:29.5px;font-weight:700;letter-spacing:0.2px;color:#047857;">85.0%</span>
<span class="t" style="left:1820.8px;top:1820px;font-size:24px;letter-spacing:-0.2px;color:#6b7280;">WO-2024-1203</span>
<span class="t" style="left:1684.5px;top:1879px;font-size:23.85px;letter-spacing:-0.06px;color:#1f2937;">Preventive bearing replacement avoided failure</span>
<div class="a" style="left:1684.8px;top:1923.6px;width:126.3px;height:37.5px;border-radius:8px;background:#dbeafe;"></div>
<span class="t" style="left:1698px;top:1931px;font-size:20.2px;letter-spacing:-0.26px;color:#2b60de;">Work Order</span>
<span class="t" style="left:1826.5px;top:1929px;font-size:20.1px;color:#6b7280;">2024-02</span>
<article class="a" style="left:2717.3px;top:1782.9px;width:1033px;height:203.5px;box-sizing:border-box;border:2px solid #eceef1;border-radius:12px;background:#fafbfc;"></article>
<div class="a" style="left:2742.6px;top:1807.7px;width:119px;height:49.5px;border-radius:9px;background:#fef3c7;"></div>
<span class="t" style="left:2759.8px;top:1817px;font-size:29.5px;font-weight:700;letter-spacing:0.2px;color:#d97706;">82.0%</span>
<span class="t" style="left:2876.6px;top:1820px;font-size:24px;letter-spacing:-0.53px;color:#6b7280;">KB-VIB-018</span>
<span class="t" style="left:2742.3px;top:1879px;font-size:23.85px;letter-spacing:-0.21px;color:#1f2937;">FFT analysis interpretation guidelines</span>
<div class="a" style="left:2742.6px;top:1923.6px;width:167.5px;height:37.5px;border-radius:8px;background:#dbeafe;"></div>
<span class="t" style="left:2753.8px;top:1931px;font-size:20.2px;letter-spacing:-0.52px;color:#2b60de;">Knowledge Base</span>
<span class="t" style="left:2925.5px;top:1929px;font-size:20.1px;color:#6b7280;">2021-06</span>
<div class="a" style="left:601.7px;top:2019.4px;width:3148px;height:100px;border-radius:16px;background:#f5f3ff;"></div>
<svg class="i" viewBox="0 0 24 24" width="32" height="32" style="left:621.5px;top:2040px;"><path d="M12 2C6.48 2 2 6.48 2 12s4.48 10 10 10 10-4.48 10-10S17.52 2 12 2zm1 15h-2v-6h2v6zm0-8h-2V7h2v2z" fill="#8b5cf6"/></svg>
<span class="t" style="left:669.8px;top:2044px;font-size:24px;letter-spacing:-0.03px;color:#6b7280;">text-embedding-3-large (1536 dims) • Cosine similarity • Top-K = 12</span>
<footer class="a" style="left:512px;top:2097px;width:3328px;height:63px;box-sizing:border-box;border-top:2px solid #e8eaed;background:#fff;box-shadow:0 -2px 5px rgba(0,0,0,.04);"></footer>
<svg class="i" viewBox="0 0 24 24" width="32" height="32" style="left:560px;top:2113.5px;"><path d="M12 2C6.48 2 2 6.48 2 12s4.48 10 10 10 10-4.48 10-10S17.52 2 12 2zm1 15h-2v-6h2v6zm0-8h-2V7h2v2z" fill="#9ca3af"/></svg>
<span class="t" style="left:608.2px;top:2118px;font-size:23px;letter-spacing:-0.09px;color:#6b7280;">Manufacturing ERP System v1.0</span>
<span class="t" style="left:3173.2px;top:2119px;font-size:21.3px;letter-spacing:-0.03px;color:#8b919d;">© 2025 All Rights Reserved</span>
<span class="t" style="left:3449px;top:2119px;font-size:21.3px;color:#8b919d;">|</span>
<span class="t" style="left:3468.8px;top:2119px;font-size:21.3px;letter-spacing:-0.22px;color:#8b919d;">Privacy Policy</span>
<span class="t" style="left:3615px;top:2119px;font-size:21.3px;color:#8b919d;">|</span>
<span class="t" style="left:3636.8px;top:2119px;font-size:21.3px;letter-spacing:-0.23px;color:#8b919d;">Terms of Service</span>
</main>
<aside id="sidebar">
<h2 class="t" style="left:32.5px;top:179px;font-size:28px;-webkit-text-stroke:1.23px;letter-spacing:0.04px;color:#fff;">Nexgile-AutoAgents</h2>
<svg class="i" viewBox="0 0 24 24" width="48" height="48" style="left:415px;top:162.5px;"><path d="M15.41 7.41L14 6l-6 6 6 6 1.41-1.41L10.83 12z" fill="rgba(255,255,255,.9)" stroke="rgba(255,255,255,.9)" stroke-width=".45"/></svg>
<div class="a" style="left:0px;top:254px;width:510px;height:2px;background:rgba(255,255,255,.2);"></div>
<div class="a" style="left:500px;top:546px;width:11px;height:1049px;border-radius:6px;background:rgba(255,255,255,.2);"></div>
<svg class="i" viewBox="0 0 24 24" width="37" height="37" style="left:47.5px;top:311.7px;"><path d="M19.93 8.35l-3.6 1.68L14 7.7V6.3l2.33-2.33 3.6 1.68c.38.18.82.01 1-.36.18-.38.01-.82-.36-1L16.65 2.1c-.38-.18-.83-.1-1.13.2l-1.74 1.74c-.18-.24-.46-.4-.78-.4-.55 0-1 .45-1 1v1H8.82C8.4 4.47 7.3 3.64 6 3.64c-1.66 0-3 1.34-3 3 0 1.1.6 2.05 1.48 2.58L7.08 18H6c-1.1 0-2 .9-2 2v1h13v-1c0-1.1-.9-2-2-2h-1.62L8.41 8.77c.17-.24.31-.49.41-.77H12v1c0 .55.45 1 1 1 .32 0 .6-.16.78-.4l1.74 1.74c.3.3.75.38 1.13.2l3.92-1.83c.38-.18.54-.62.36-1-.18-.37-.62-.54-1-.36zM6 7.64c-.55 0-1-.45-1-1s.45-1 1-1 1 .45 1 1-.45 1-1 1z" fill="#fff"/></svg>
<span class="t" style="left:108.3px;top:318px;font-size:27.6px;-webkit-text-stroke:1.21px;letter-spacing:0.98px;color:#fff;">Machine Monitoring</span>
<svg class="i" viewBox="0 0 24 24" width="37" height="37" style="left:47.5px;top:416px;"><path d="M14.5 17c0 1.65-1.35 3-3 3s-3-1.35-3-3h2c0 .55.45 1 1 1s1-.45 1-1-.45-1-1-1H2v-2h9.5c1.65 0 3 1.35 3 3zM19 6.5C19 4.57 17.43 3 15.5 3S12 4.57 12 6.5h2c0-.83.67-1.5 1.5-1.5s1.5.67 1.5 1.5S16.33 8 15.5 8H2v2h13.5c1.93 0 3.5-1.57 3.5-3.5zm-.5 4.5H2v2h16.5c.83 0 1.5.67 1.5 1.5s-.67 1.5-1.5 1.5v2c1.93 0 3.5-1.57 3.5-3.5S20.43 11 18.5 11z" fill="#fff"/></svg>
<span class="t" style="left:108.3px;top:422px;font-size:27.6px;-webkit-text-stroke:1.21px;letter-spacing:0.61px;color:#fff;">Clean Room Monitoring</span>
<svg class="i" viewBox="0 0 24 24" width="37" height="37" style="left:47.5px;top:521.3px;"><path d="M19 3H5c-1.1 0-2 .9-2 2v14c0 1.1.9 2 2 2h14c1.1 0 2-.9 2-2V5c0-1.1-.9-2-2-2zM9 17H7v-5h2v5zm4 0h-2v-3h2v3zm0-5h-2v-2h2v2zm4 5h-2V7h2v10z" fill="#fff"/></svg>
<span class="t" style="left:108.3px;top:527px;font-size:27.6px;-webkit-text-stroke:1.21px;letter-spacing:-0.11px;color:#fff;">OEE Analytics</span>
<svg class="i" viewBox="0 0 24 24" width="36" height="36" style="left:415px;top:522.6px;"><path d="M16.59 8.59L12 13.17 7.41 8.59 6 10l6 6 6-6z" fill="#fff" stroke="#fff" stroke-width=".45"/></svg>
<svg class="i" viewBox="0 0 24 24" width="37" height="37" style="left:47.5px;top:644px;"><path d="M12 2C6.48 2 2 6.48 2 12s4.48 10 10 10 10-4.48 10-10S17.52 2 12 2zm4.9 13.49l-1.4 1.4c-.2.2-.51.2-.71 0l-3.41-3.41c-1.22.43-2.64.17-3.62-.81-1.11-1.11-1.3-2.79-.59-4.1l2.35 2.35 1.41-1.41-2.35-2.34c1.32-.71 2.99-.52 4.1.59.98.98 1.24 2.4.81 3.62l3.41 3.41c.2.19.2.51 0 .7z" fill="#fff"/></svg>
<span class="t" style="left:108px;top:630px;font-size:27.6px;-webkit-text-stroke:1.21px;letter-spacing:0.67px;color:#fff;">Predictive</span>
<span class="t" style="left:108px;top:670px;font-size:27.6px;-webkit-text-stroke:1.21px;letter-spacing:0.88px;color:#fff;">Maintenance</span>
<svg class="i" viewBox="0 0 24 24" width="36" height="36" style="left:415px;top:645.3px;"><path d="M16.59 8.59L12 13.17 7.41 8.59 6 10l6 6 6-6z" fill="#fff" stroke="#fff" stroke-width=".45"/></svg>
<h3 class="t" style="left:48px;top:754px;font-size:24px;-webkit-text-stroke:1.06px;letter-spacing:1.01px;color:#fff;">DIGITAL TWIN</h3>
<svg class="i" viewBox="0 0 24 24" width="37" height="37" style="left:47.5px;top:838.3px;"><path d="M3 4c0-.55.45-1 1-1h2V1H4C2.34 1 1 2.34 1 4v2h2V4z M3 20v-2H1v2c0 1.66 1.34 3 3 3h2v-2H4c-.55 0-1-.45-1-1z M20 1h-2v2h2c.55 0 1 .45 1 1v2h2V4c0-1.66-1.34-3-3-3z M21 20c0 .55-.45 1-1 1h-2v2h2c1.66 0 3-1.34 3-3v-2h-2v2z M19 14.87V9.13c0-.72-.38-1.38-1-1.73l-5-2.88c-.31-.18-.65-.27-1-.27s-.69.09-1 .27L6 7.39c-.62.36-1 1.02-1 1.74v5.74c0 .72.38 1.38 1 1.73l5 2.88c.31.18.65.27 1 .27s.69-.09 1-.27l5-2.88c.62-.35 1-1.01 1-1.73zm-8 2.3l-4-2.3v-4.63l4 2.33v4.6zm1-6.33L8.04 8.53 12 6.25l3.96 2.28L12 10.84zm5 4.03l-4 2.3v-4.6l4-2.33v4.63z" fill="#fff" transform="translate(12 12) scale(.93) translate(-12 -12)"/></svg>
<span class="t" style="left:107.8px;top:844px;font-size:27.6px;-webkit-text-stroke:1.21px;letter-spacing:0.35px;color:#fff;">DIGITAL TWIN</span>
<svg class="i" viewBox="0 0 24 24" width="36" height="36" style="left:415px;top:839.6px;"><path d="M16.59 8.59L12 13.17 7.41 8.59 6 10l6 6 6-6z" fill="#fff" stroke="#fff" stroke-width=".45"/></svg>
<h3 class="t" style="left:48px;top:935px;font-size:24px;-webkit-text-stroke:1.06px;letter-spacing:-0.46px;color:#fff;">SCENARIOS</h3>
<svg class="i" viewBox="0 0 24 24" width="37" height="37" style="left:47.5px;top:1032.4px;"><path d="M9 15c-2.67 0-8 1.34-8 4v2h16v-2c0-2.66-5.33-4-8-4z M22.1 6.84c.01-.11.02-.22.02-.34 0-.12-.01-.23-.03-.34l.74-.58c.07-.05.08-.15.04-.22l-.7-1.21c-.04-.08-.14-.1-.21-.08l-.86.35c-.18-.14-.38-.25-.59-.34l-.13-.93c-.02-.09-.09-.15-.18-.15h-1.4c-.09 0-.16.06-.17.15l-.13.93c-.21.09-.41.21-.59.34l-.87-.35c-.08-.03-.17 0-.21.08l-.7 1.21c-.04.08-.03.17.04.22l.74.58c-.02.11-.03.23-.03.34 0 .11.01.23.03.34l-.74.58c-.07.05-.08.15-.04.22l.7 1.21c.04.08.14.1.21.08l.87-.35c.18.14.38.25.59.34l.13.93c.01.09.08.15.17.15h1.4c.09 0 .16-.06.17-.15l.13-.93c.21-.09.41-.21.59-.34l.87.35c.08.03.17 0 .21-.08l.7-1.21c.04-.08.03-.17-.04-.22l-.73-.58zm-2.6.91c-.69 0-1.25-.56-1.25-1.25s.56-1.25 1.25-1.25 1.25.56 1.25 1.25-.56 1.25-1.25 1.25z M19.92 11.68l-.5-.87c-.03-.06-.1-.08-.15-.06l-.62.25c-.13-.1-.27-.18-.42-.24l-.09-.66c-.02-.06-.08-.1-.14-.1h-1c-.06 0-.11.04-.12.11l-.09.66c-.15.06-.29.15-.42.24l-.62-.25c-.06-.02-.12 0-.15.06l-.5.87c-.03.06-.02.12.03.16l.53.41c-.01.08-.02.16-.02.24 0 .08.01.17.02.24l-.53.41c-.05.04-.06.11-.03.16l.5.87c.03.06.1.08.15.06l.62-.25c.13.1.27.18.42.24l.09.66c.01.07.06.11.12.11h1c.06 0 .12-.04.12-.11l.09-.66c.15-.06.29-.15.42-.24l.62.25c.06.02.12 0 .15-.06l.5-.87c.03-.06.02-.12-.03-.16l-.52-.41c.01-.08.02-.16.02-.24 0-.08-.01-.17-.02-.24l.53-.41c.05-.04.06-.11.04-.17zm-2.42 1.65c-.46 0-.83-.38-.83-.83 0-.46.38-.83.83-.83s.83.38.83.83c0 .46-.37.83-.83.83z M4.74 9h8.53c.27 0 .49-.22.49-.49v-.02c0-.27-.22-.49-.49-.49H13c0-1.48-.81-2.75-2-3.45v.95c0 .28-.22.5-.5.5s-.5-.22-.5-.5V4.14C9.68 4.06 9.35 4 9 4s-.68.06-1 .14V5.5c0 .28-.22.5-.5.5S7 5.78 7 5.5v-.95C5.81 5.25 5 6.52 5 8h-.26c-.27 0-.49.22-.49.49v.03c0 .26.22.48.49.48z M9 13c1.86 0 3.41-1.28 3.86-3H5.14c.45 1.72 2 3 3.86 3z" fill="#fff"/></svg>
<span class="t" style="left:108px;top:1018px;font-size:27.6px;-webkit-text-stroke:1.21px;letter-spacing:0.39px;color:#fff;">Predictive</span>
<span class="t" style="left:108px;top:1058px;font-size:27.6px;-webkit-text-stroke:1.21px;letter-spacing:0.58px;color:#fff;">Maintenance</span>
<div class="a" style="left:379px;top:1027.7px;width:72px;height:48px;border-radius:24px;background:#e7f2f7;"></div>
<span class="t" style="left:403.5px;top:1041px;font-size:23px;-webkit-text-stroke:0.71px;letter-spacing:1.5px;color:#0e4f68;">AI</span>
<svg class="i" viewBox="0 0 24 24" width="37" height="37" style="left:47.5px;top:1153.7px;"><path d="M12 2C6.48 2 2 6.48 2 12s4.48 10 10 10 10-4.48 10-10S17.52 2 12 2zm-2 14.5v-9l6 4.5-6 4.5z" fill="#fff"/></svg>
<span class="t" style="left:109.3px;top:1160px;font-size:27.6px;-webkit-text-stroke:1.21px;letter-spacing:0.61px;color:#fff;">Virtual Commissioning</span>
<svg class="i" viewBox="0 0 24 24" width="37" height="37" style="left:47.5px;top:1257.2px;"><path d="M14.5 2.5c0 1.5-1.5 6-1.5 6h-2S9.5 4 9.5 2.5C9.5 1.12 10.62 0 12 0s2.5 1.12 2.5 2.5zM12 10c-1.1 0-2 .9-2 2s.9 2 2 2 2-.9 2-2-.9-2-2-2zm4.08-4.89c.18-.75.33-1.47.39-2.06C19.75 4.69 22 8.08 22 12c0 5.52-4.48 10-10 10S2 17.52 2 12c0-3.92 2.25-7.31 5.53-8.95.07.59.21 1.32.39 2.06C5.58 6.51 4 9.07 4 12c0 4.42 3.58 8 8 8s8-3.58 8-8c0-2.93-1.58-5.49-3.92-6.89zM18 12c0 3.31-2.69 6-6 6s-6-2.69-6-6c0-2 .98-3.77 2.48-4.86.23.81.65 2.07.65 2.07C8.43 9.93 8 10.92 8 12c0 2.21 1.79 4 4 4s4-1.79 4-4c0-1.08-.43-2.07-1.13-2.79 0 0 .41-1.22.65-2.07C17.02 8.23 18 10 18 12z" fill="#fff"/></svg>
<span class="t" style="left:108.3px;top:1263px;font-size:27.6px;-webkit-text-stroke:1.21px;letter-spacing:-0.17px;color:#fff;">Quality Crisis Response</span>
<h3 class="t" style="left:48px;top:1351px;font-size:24px;-webkit-text-stroke:1.06px;letter-spacing:-0.38px;color:#fff;">MOLD LIFECYCLE</h3>
<svg class="i" viewBox="0 0 24 24" width="37" height="37" style="left:47.5px;top:1434.7px;"><path d="M12 2l-5.5 9h11z M17.5 13a4.5 4.5 0 1 0 0 9a4.5 4.5 0 1 0 0-9z M3 13.5h8v8H3z" fill="#fff"/></svg>
<span class="t" style="left:107.8px;top:1441px;font-size:27.6px;-webkit-text-stroke:1.21px;letter-spacing:-1.33px;color:#fff;">MOLD LIFECYCLE</span>
<svg class="i" viewBox="0 0 24 24" width="36" height="36" style="left:415px;top:1436px;"><path d="M16.59 8.59L12 13.17 7.41 8.59 6 10l6 6 6-6z" fill="#fff" stroke="#fff" stroke-width=".45"/></svg>
<h3 class="t" style="left:48px;top:1531px;font-size:24px;-webkit-text-stroke:1.06px;letter-spacing:-0.09px;color:#fff;">OPERATIONS</h3>
<svg class="i" viewBox="0 0 24 24" width="37" height="37" style="left:47.5px;top:1615.5px;"><path d="M13 10h-2V8h2v2zm0-4h-2V1h2v5zM7 18c-1.1 0-1.99.9-1.99 2S5.9 22 7 22s2-.9 2-2-.9-2-2-2zm10 0c-1.1 0-1.99.9-1.99 2s.89 2 1.99 2 2-.9 2-2-.9-2-2-2zm-8.9-5h7.45c.75 0 1.41-.41 1.75-1.03L21 4.96 19.25 4l-3.7 7H8.53L4.27 2H1v2h2l3.6 7.59-1.35 2.44C4.52 15.37 5.48 17 7 17h12v-2H7l1.1-2z" fill="#fff"/></svg>
<span class="t" style="left:107.8px;top:1622px;font-size:27.6px;-webkit-text-stroke:1.21px;letter-spacing:0.91px;color:#fff;">Production Planning</span>
<svg class="i" viewBox="0 0 24 24" width="36" height="36" style="left:415px;top:1616.8px;"><path d="M16.59 8.59L12 13.17 7.41 8.59 6 10l6 6 6-6z" fill="#fff" stroke="#fff" stroke-width=".45"/></svg>
<svg class="i" viewBox="0 0 24 24" width="37" height="37" style="left:47.5px;top:1724.3px;"><path d="M23 12l-2.44-2.79.34-3.69-3.61-.82-1.89-3.2L12 2.96 8.6 1.5 6.71 4.69 3.1 5.5l.34 3.7L1 12l2.44 2.79-.34 3.7 3.61.82L8.6 22.5l3.4-1.47 3.4 1.46 1.89-3.19 3.61-.82-.34-3.69L23 12zm-12.91 4.72l-3.8-3.81 1.48-1.48 2.32 2.33 5.85-5.87 1.48 1.48-7.33 7.35z" fill="#fff"/></svg>
<span class="t" style="left:108.3px;top:1730px;font-size:27.6px;-webkit-text-stroke:1.21px;letter-spacing:1.02px;color:#fff;">Quality Control</span>
<svg class="i" viewBox="0 0 24 24" width="36" height="36" style="left:415px;top:1725.6px;"><path d="M16.59 8.59L12 13.17 7.41 8.59 6 10l6 6 6-6z" fill="#fff" stroke="#fff" stroke-width=".45"/></svg>
<svg class="i" viewBox="0 0 24 24" width="37" height="37" style="left:47.5px;top:1833.1px;"><path d="M13 8.57c-.79 0-1.43.64-1.43 1.43s.64 1.43 1.43 1.43 1.43-.64 1.43-1.43-.64-1.43-1.43-1.43z M13 3C9.25 3 6.2 5.94 6.02 9.64L4.1 12.2c-.25.33-.01.8.4.8H6v3c0 1.1.9 2 2 2h1v3h7v-4.68c2.36-1.12 4-3.53 4-6.32 0-3.87-3.13-7-7-7zm3 7c0 .13-.01.26-.02.39l.83.66c.08.06.1.16.05.25l-.8 1.39c-.05.09-.16.12-.24.09l-.99-.4c-.21.16-.43.29-.67.39L14 13.83c-.01.1-.1.17-.2.17h-1.6c-.1 0-.18-.07-.2-.17l-.15-1.06c-.25-.1-.47-.23-.68-.39l-.99.4c-.09.03-.2 0-.25-.09l-.8-1.39c-.05-.08-.03-.19.05-.25l.84-.66c-.01-.13-.02-.26-.02-.39s.02-.27.04-.39l-.85-.66c-.08-.06-.1-.16-.05-.26l.8-1.38c.05-.09.15-.12.24-.09l1 .4c.2-.15.43-.29.67-.39l.15-1.06c.02-.1.1-.17.2-.17h1.6c.1 0 .18.07.2.17l.15 1.06c.24.1.46.23.67.39l1-.4c.09-.03.2 0 .24.09l.8 1.38c.05.09.03.2-.05.26l-.85.66c.03.12.04.25.04.39z" fill="#fff"/></svg>
<span class="t" style="left:109.3px;top:1839px;font-size:27.6px;-webkit-text-stroke:1.21px;letter-spacing:0.83px;color:#fff;">AI Quality Control</span>
<svg class="i" viewBox="0 0 24 24" width="36" height="36" style="left:415px;top:1834.4px;"><path d="M16.59 8.59L12 13.17 7.41 8.59 6 10l6 6 6-6z" fill="#fff" stroke="#fff" stroke-width=".45"/></svg>
<svg class="i" viewBox="0 0 24 24" width="37" height="37" style="left:47.5px;top:1942.4px;"><path d="M20 3H4c-1.1 0-2 .9-2 2v14c0 1.1.9 2 2 2h16c1.1 0 2-.9 2-2V5c0-1.1-.9-2-2-2zM10 17H5v-2h5v2zm0-4H5v-2h5v2zm0-4H5V7h5v2zm4.82 6L12 12.16l1.41-1.41 1.41 1.42L17.99 9l1.42 1.42L14.82 15z" fill="#fff"/></svg>
<span class="t" style="left:108.3px;top:1948px;font-size:27.6px;-webkit-text-stroke:1.21px;letter-spacing:0.91px;color:#fff;">Compliance &amp; Audit</span>
<svg class="i" viewBox="0 0 24 24" width="36" height="36" style="left:415px;top:1943.7px;"><path d="M16.59 8.59L12 13.17 7.41 8.59 6 10l6 6 6-6z" fill="#fff" stroke="#fff" stroke-width=".45"/></svg>
<h3 class="t" style="left:49px;top:2039px;font-size:24px;-webkit-text-stroke:1.06px;letter-spacing:0.09px;color:#fff;">ANALYTICS &amp; REPORTING</h3>
<svg class="i" viewBox="0 0 24 24" width="37" height="37" style="left:47.5px;top:2122.3px;"><path d="M19 3H5c-1.1 0-2 .9-2 2v14c0 1.1.9 2 2 2h14c1.1 0 2-.9 2-2V5c0-1.1-.9-2-2-2zM9 17H7v-7h2v7zm4 0h-2V7h2v10zm4 0h-2v-4h2v4z" fill="#fff"/></svg>
<span class="t" style="left:109.8px;top:2128px;font-size:27.6px;-webkit-text-stroke:1.21px;letter-spacing:0.42px;color:#fff;">Analytics &amp; Reports</span>
<svg class="i" viewBox="0 0 24 24" width="36" height="36" style="left:415px;top:2123.6px;"><path d="M16.59 8.59L12 13.17 7.41 8.59 6 10l6 6 6-6z" fill="#fff" stroke="#fff" stroke-width=".45"/></svg>
</aside>
<header id="topbar">
<div class="a" style="left:48px;top:24px;width:80px;height:80px;border-radius:16px;background:rgba(255,255,255,.2);"></div>
<svg class="i" viewBox="0 0 24 24" width="44" height="44" style="left:66px;top:40px;"><path d="M19.93 8.35l-3.6 1.68L14 7.7V6.3l2.33-2.33 3.6 1.68c.38.18.82.01 1-.36.18-.38.01-.82-.36-1L16.65 2.1c-.38-.18-.83-.1-1.13.2l-1.74 1.74c-.18-.24-.46-.4-.78-.4-.55 0-1 .45-1 1v1H8.82C8.4 4.47 7.3 3.64 6 3.64c-1.66 0-3 1.34-3 3 0 1.1.6 2.05 1.48 2.58L7.08 18H6c-1.1 0-2 .9-2 2v1h13v-1c0-1.1-.9-2-2-2h-1.62L8.41 8.77c.17-.24.31-.49.41-.77H12v1c0 .55.45 1 1 1 .32 0 .6-.16.78-.4l1.74 1.74c.3.3.75.38 1.13.2l3.92-1.83c.38-.18.54-.62.36-1-.18-.37-.62-.54-1-.36zM6 7.64c-.55 0-1-.45-1-1s.45-1 1-1 1 .45 1 1-.45 1-1 1z" fill="#fff"/></svg>
<h1 class="t" style="left:153px;top:31px;font-size:35.7px;-webkit-text-stroke:1.57px;letter-spacing:-0.01px;color:#fff;">Nexgile-AutoAgents</h1>
<p class="t" style="left:151.8px;top:78px;font-size:24.3px;letter-spacing:-0.02px;color:#fff;">AI Agents Powering Automotive Automation</p>
<div class="a" style="left:1216px;top:26px;width:896px;height:75px;box-sizing:border-box;border-radius:16px;background:rgba(255,255,255,.1);border:2px solid rgba(255,255,255,.2);"></div>
<svg class="i" viewBox="0 0 24 24" width="48" height="48" style="left:1239.9px;top:45.8px;"><path d="M15.5 14h-.79l-.28-.27C15.41 12.59 16 11.11 16 9.5 16 5.91 13.09 3 9.5 3S3 5.91 3 9.5 5.91 16 9.5 16c1.61 0 3.09-.59 4.23-1.57l.27.28v.79l5 4.99L20.49 19l-4.99-5zm-6 0C7.01 14 5 11.99 5 9.5S7.01 5 9.5 5 14 7.01 14 9.5 11.99 14 9.5 14z" fill="rgba(255,255,255,.65)"/></svg>
<span class="t" style="left:1297.5px;top:51px;font-size:27.8px;letter-spacing:-0.24px;color:rgba(255,255,255,.7);">Search machines, molds, projects, production...</span>
<span class="t" style="left:2725px;top:52px;font-size:30.5px;letter-spacing:-1.4px;color:#111827;">US</span>
<span class="t" style="left:2781.5px;top:50px;font-size:28px;-webkit-text-stroke:1.23px;letter-spacing:0.25px;color:#fff;">English</span>
<svg class="i" viewBox="0 0 24 24" width="32" height="32" style="left:2889px;top:47px;"><path d="M16.59 8.59L12 13.17 7.41 8.59 6 10l6 6 6-6z" fill="#fff" stroke="#fff" stroke-width=".45"/></svg>
<div class="a" style="left:2966.5px;top:34px;width:257.5px;height:58.5px;border-radius:30px;background:#dcfce7;"></div>
<div class="a" style="left:3038px;top:55.5px;width:16.5px;height:16.5px;border-radius:50%;background:#166534;"></div>
<span class="t" style="left:3070.5px;top:50px;font-size:26.5px;-webkit-text-stroke:0.42px;letter-spacing:-0.33px;color:#166534;">LIVE</span>
<span class="t" style="left:3143.5px;top:52px;font-size:23px;letter-spacing:0.17px;color:#2f8a50;">23ms</span>
<svg class="i" viewBox="0 0 24 24" width="44" height="44" style="left:3271.3px;top:39.6px;"><path d="M12 22c1.1 0 2-.9 2-2h-4c0 1.1.89 2 2 2zm6-6v-5c0-3.07-1.64-5.64-4.5-6.32V4c0-.83-.67-1.5-1.5-1.5s-1.5.67-1.5 1.5v.68C7.63 5.36 6 7.92 6 11v5l-2 2v1h16v-1l-2-2z" fill="#fff"/></svg>
<div class="a" style="left:3276.8px;top:11px;width:62px;height:40px;border-radius:20px;background:#f97316;"></div>
<span class="t" style="left:3300.5px;top:20px;font-size:22px;font-weight:700;color:#fff;">5</span>
<div class="a" style="left:3371.3px;top:16px;width:96px;height:96px;box-sizing:border-box;border-radius:50%;border:4px solid rgba(255,255,255,.32);"></div>
<div class="a" style="left:3379.3px;top:24px;width:80px;height:80px;border-radius:50%;background:#4f46e5;"></div>
<span class="t" style="left:3400.7px;top:47px;font-size:32.5px;-webkit-text-stroke:0.52px;letter-spacing:-0.4px;color:#fff;">JS</span>
<span class="t" style="left:3482.3px;top:34px;font-size:28px;-webkit-text-stroke:1.23px;letter-spacing:0.39px;color:#fff;">John Smith</span>
<span class="t" style="left:3482px;top:71px;font-size:24.3px;letter-spacing:0.18px;color:#fff;">Production Manager</span>
<svg class="i" viewBox="0 0 24 24" width="48" height="48" style="left:3727.8px;top:40.2px;"><path d="M16.59 8.59L12 13.17 7.41 8.59 6 10l6 6 6-6z" fill="#fff" stroke="#fff" stroke-width=".45"/></svg>
</header>
</div>
</body>
</html>
